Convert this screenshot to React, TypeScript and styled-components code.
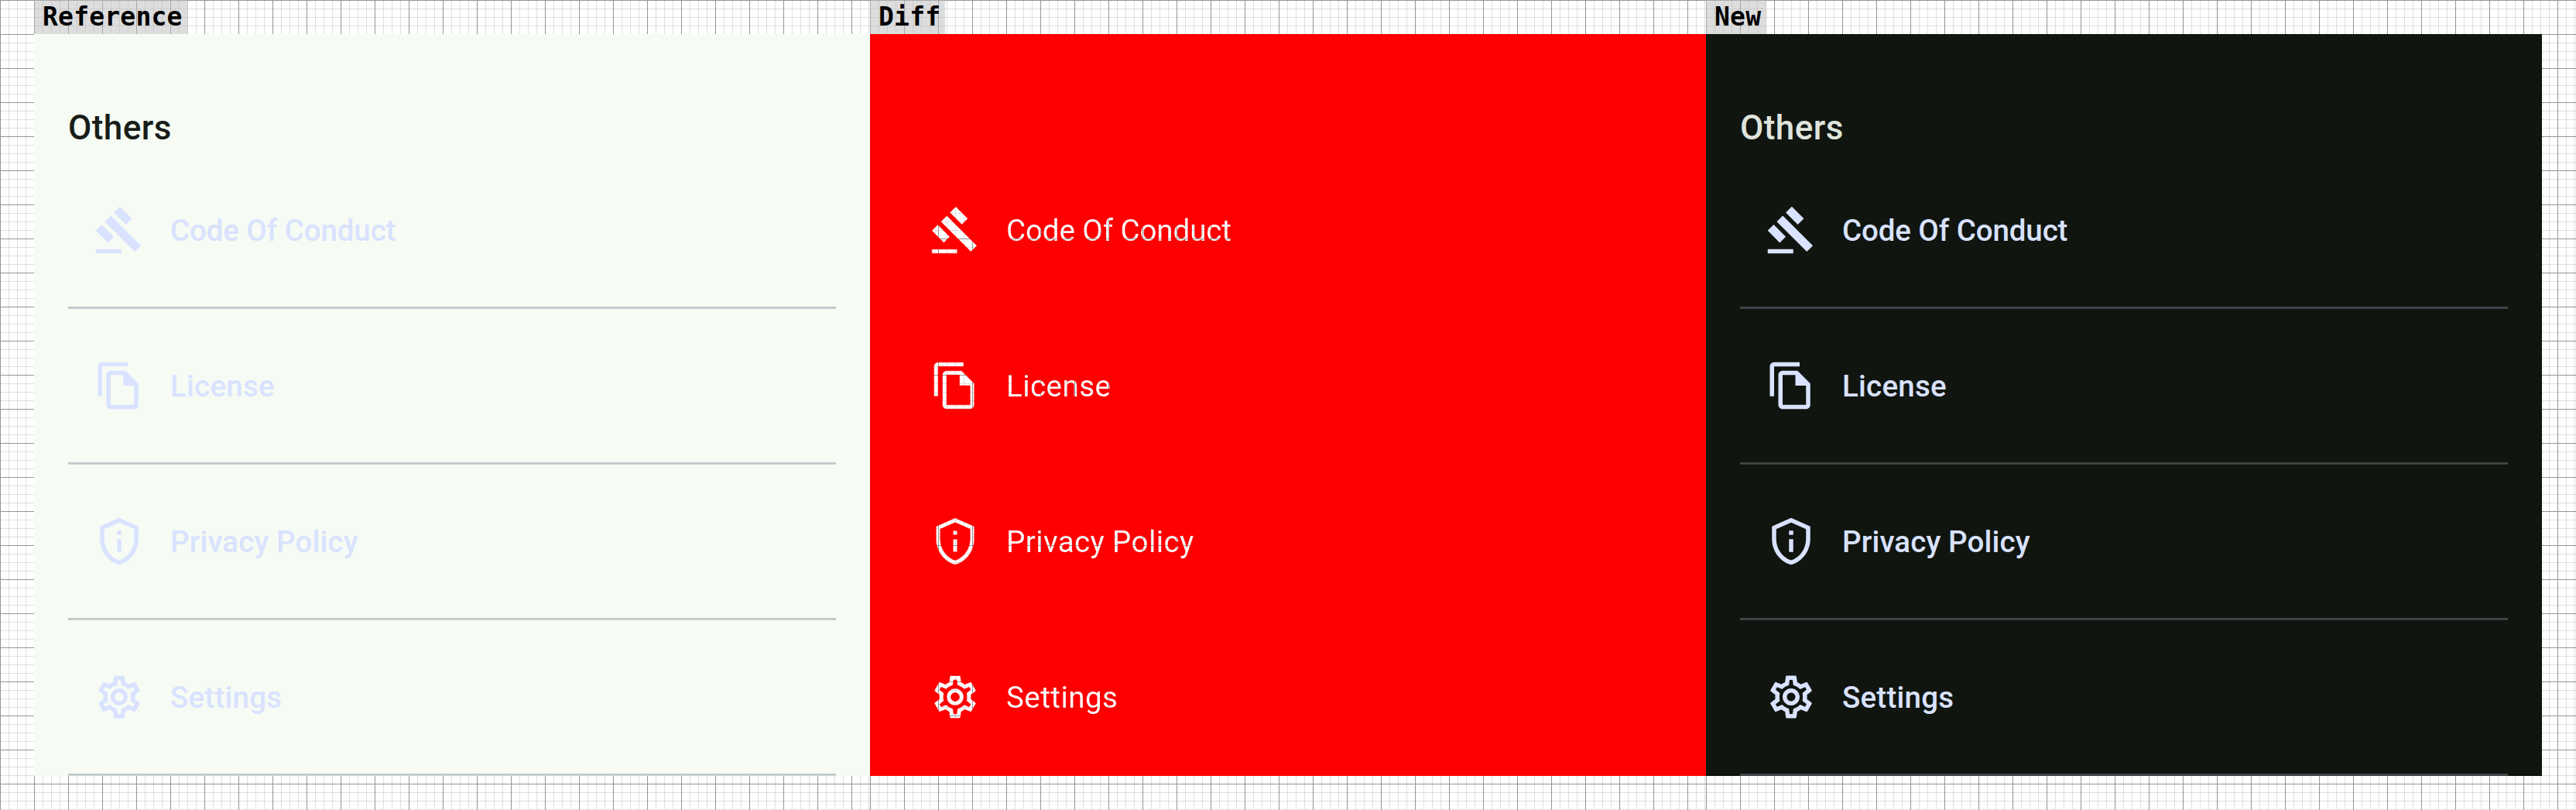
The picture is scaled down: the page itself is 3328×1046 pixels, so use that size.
import React from "react";
import styled, { createGlobalStyle, css } from "styled-components";
import { MdGavel, MdOutlineFileCopy, MdOutlinePrivacyTip, MdOutlineSettings } from "react-icons/md";

const MAJOR = "#959595";
const MINOR = "#dfdfdf";

const gridLines = css`
  background-color: #fff;
  background-image:
    linear-gradient(to right, ${MAJOR} 1px, transparent 1px),
    linear-gradient(to bottom, ${MAJOR} 1px, transparent 1px),
    linear-gradient(to right, ${MINOR} 1px, transparent 1px),
    linear-gradient(to bottom, ${MINOR} 1px, transparent 1px);
  background-size: 44px 44px, 44px 44px, 11px 11px, 11px 11px;
`;

const GlobalStyle = createGlobalStyle`
  body { margin: 0; background: #fff; }
`;

const Board = styled.main`
  display: grid;
  grid-template-columns: 1124px 1080px 1124px;
  width: 3328px;
  height: 1046px;
  overflow: hidden;
`;

const Column = styled.section<{ $inset?: boolean }>`
  ${gridLines}
  box-sizing: border-box;
  display: flex;
  flex-direction: column;
  align-items: flex-start;
  padding-left: ${(p) => (p.$inset ? 44 : 0)}px;
`;

const Label = styled.header<{ $width: number }>`
  box-sizing: border-box;
  width: ${(p) => p.$width}px;
  height: 44px;
  padding-left: 11px;
  background: rgba(187, 187, 187, 0.5);
  color: #000;
  font: bold 33px/43px "DejaVu Sans Mono", monospace;
  letter-spacing: 0.2px;
  white-space: pre;
`;

type Tone = "light" | "diff" | "dark";

const tones = {
  light: { bg: "#f6fbf4", title: "#181d18", item: "#d9e2ff", line: "#bec9c8", edge: "#cbd5d1", base: "#f6fbf4" },
  diff: { bg: "#ff0000", title: "transparent", item: "#ffffff", line: "transparent", edge: "transparent", base: "#ff0000" },
  dark: { bg: "#10150f", title: "#dfe4dc", item: "#d9e2ff", line: "#3f4947", edge: "#343d42", base: "#100a10" },
};

const Screen = styled.div<{ $tone: Tone }>`
  box-sizing: border-box;
  width: 1080px;
  height: 958px;
  padding: 88px 44px 0;
  background: ${(p) => tones[p.$tone].bg};
  box-shadow: inset 0 -1px ${(p) => tones[p.$tone].base};
  color: ${(p) => tones[p.$tone].item};
  font-family: Roboto, sans-serif;
`;

const Title = styled.h2<{ $tone: Tone }>`
  margin: 0;
  height: 66px;
  font-size: 44px;
  line-height: 66px;
  font-weight: 500;
  letter-spacing: 0.45px;
  color: ${(p) => tones[p.$tone].title};
`;

const Item = styled.div<{ $tone: Tone }>`
  box-sizing: border-box;
  display: flex;
  align-items: center;
  gap: 33px;
  width: ${(p) => (p.$tone === "diff" ? 1036 : 992)}px;
  height: 201px;
  padding: 0 33px 3px;
  background: linear-gradient(${(p) => tones[p.$tone].line} 2px, ${(p) => tones[p.$tone].edge} 2px) bottom / 100% 3px no-repeat;
`;

const IconSlot = styled.span<{ $fill?: string }>`
  display: flex;
  flex: none;
  svg {
    width: 66px;
    height: 66px;
  }
  ${(p) =>
    p.$fill &&
    css`
      svg path:not([fill="none"]) {
        fill: url(#${p.$fill});
        stroke: #f00;
        stroke-width: 0.2px;
      }
    `}
`;

const Name = styled.span<{ $tone: Tone; $tracking: number }>`
  padding-top: 1px;
  font-size: 38.5px;
  line-height: 55px;
  font-weight: 500;
  letter-spacing: ${(p) => p.$tracking}px;
  white-space: nowrap;
  ${(p) =>
    p.$tone === "diff" &&
    css`
      ${gridLines}
      background-attachment: fixed;
      background-position: 1124px 0;
      background-clip: text;
      -webkit-background-clip: text;
      color: transparent;
      font-weight: 400;
    `}
`;

const PatternDefs = styled.svg`
  position: absolute;
  width: 0;
  height: 0;
`;

const items = [
  { name: "Code Of Conduct", Icon: MdGavel, gridY: 0, tracking: -0.11, thinTracking: -0.08 },
  { name: "License", Icon: MdOutlineFileCopy, gridY: 25, tracking: 0.24, thinTracking: 0.45 },
  { name: "Privacy Policy", Icon: MdOutlinePrivacyTip, gridY: 6, tracking: 0.13, thinTracking: 0.4 },
  { name: "Settings", Icon: MdOutlineSettings, gridY: 31, tracking: 0.22, thinTracking: 0.48 },
];

// The icons' 24-unit boxes are drawn 66px wide, so the grid is scaled back to page pixels.
const GridPatterns = () => (
  <PatternDefs aria-hidden="true">
    <defs>
      {items.map(({ gridY }, i) => (
        <pattern
          key={i}
          id={`grid-${i}`}
          width="44"
          height="44"
          patternUnits="userSpaceOnUse"
          patternTransform={`scale(${24 / 66}) translate(-33 ${-gridY})`}
        >
          <rect width="44" height="44" fill="#fff" />
          {[11, 22, 33].map((n) => (
            <g key={n} fill={MINOR}>
              <rect x={n} width="1" height="44" />
              <rect y={n} width="44" height="1" />
            </g>
          ))}
          <rect width="1" height="44" fill={MAJOR} />
          <rect width="44" height="1" fill={MAJOR} />
        </pattern>
      ))}
    </defs>
  </PatternDefs>
);

const Menu = ({ tone }: { tone: Tone }) => (
  <Screen $tone={tone}>
    {tone === "diff" ? <Title as="div" $tone={tone} /> : <Title $tone={tone}>Others</Title>}
    {items.map(({ name, Icon, tracking, thinTracking }, i) => (
      <Item key={name} $tone={tone}>
        <IconSlot $fill={tone === "diff" ? `grid-${i}` : undefined}>
          <Icon />
        </IconSlot>
        <Name $tone={tone} $tracking={tone === "diff" ? thinTracking : tracking}>
          {name}
        </Name>
      </Item>
    ))}
  </Screen>
);

export default function App() {
  return (
    <>
      <GlobalStyle />
      <GridPatterns />
      <Board>
        <Column $inset>
          <Label $width={199}>Reference</Label>
          <Menu tone="light" />
        </Column>
        <Column>
          <Label $width={97}>Diff</Label>
          <Menu tone="diff" />
        </Column>
        <Column>
          <Label $width={78}>New</Label>
          <Menu tone="dark" />
        </Column>
      </Board>
    </>
  );
}
